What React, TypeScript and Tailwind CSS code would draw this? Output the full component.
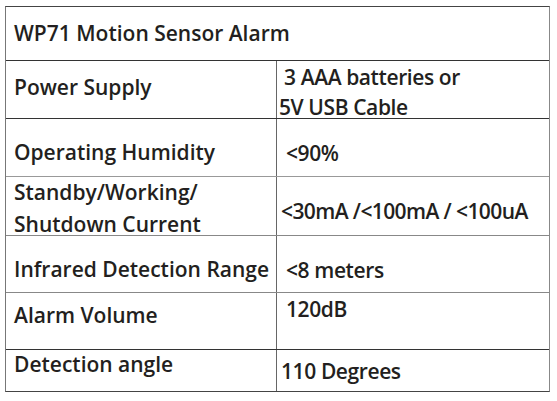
const font = { fontFamily: '"Open Sans", "Noto Sans", sans-serif' };

export default function App() {
  return (
    <div className="h-[401px] w-[557px] bg-white pl-[5px] pt-[6px] text-[21px] font-semibold leading-[24px] text-[#231f20]" style={font}>
      <div className="w-[545px] border border-[#444] border-l-[#777] border-r-[#888]">
        <div className="h-[54px] border-b border-[#333] pl-[8px] pt-[14px]">WP71 Motion Sensor Alarm</div>

        <div className="flex h-[58px] border-b border-[#333]">
          <div className="w-[271px] border-r border-[#666] pl-[8px] pt-[14px]">Power Supply</div>
          <div className="flex-1 leading-[30px] tracking-[-0.4px]">
            <div className="pl-[7px] pt-[1px]">3 AAA batteries or</div>
            <div className="pl-[2px]">5V USB Cable</div>
          </div>
        </div>

        <div className="flex h-[58px] border-b border-[#999]">
          <div className="w-[271px] border-r border-[#666] pl-[8px] pt-[21px]">Operating Humidity</div>
          <div className="flex-1 pl-[9px] pt-[22px] tracking-[-0.4px]">&lt;90%</div>
        </div>

        <div className="flex h-[59px] border-b border-[#888]">
          <div className="w-[271px] border-r border-[#666] pl-[8px] leading-[32px]">
            <div className="-mt-[1px]">Standby/Working/</div>
            <div>Shutdown Current</div>
          </div>
          <div className="flex-1 pl-[4px] pt-[22px] tracking-[-0.6px]">&lt;30mA /&lt;100mA / &lt;100uA</div>
        </div>

        <div className="flex h-[57px] border-b border-[#888]">
          <div className="w-[271px] border-r border-[#666] pl-[8px] pt-[21px]">Infrared Detection Range</div>
          <div className="flex-1 pl-[9px] pt-[22px] tracking-[-0.4px]">&lt;8 meters</div>
        </div>

        <div className="flex h-[57px] border-b border-[#333]">
          <div className="w-[271px] border-r border-[#666] pl-[8px] pt-[10px]">Alarm Volume</div>
          <div className="flex-1 pl-[9px] pt-[4px] tracking-[-0.4px]">120dB</div>
        </div>

        <div className="flex h-[41px]">
          <div className="w-[271px] border-r border-[#666] pl-[8px] pt-[2px]">Detection angle</div>
          <div className="flex-1 pl-[4px] pt-[9px] tracking-[-0.4px]">110 Degrees</div>
        </div>
      </div>
    </div>
  );
}
